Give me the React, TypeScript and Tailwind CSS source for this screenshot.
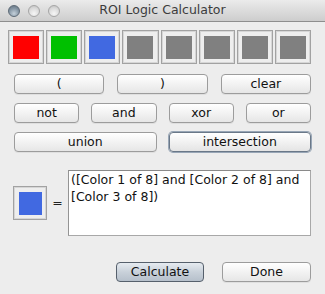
const SWATCHES = ['#ff0000', '#00c000', '#4169e1', '#808080', '#808080', '#808080', '#808080', '#808080'];

function AquaButton({ label, variant = 'normal' }: { label: string; variant?: 'normal' | 'focus' | 'default' }) {
  const base =
    'flex-1 h-[20px] rounded-[4px] flex items-center justify-center text-[12.5px] leading-none text-[#111]';
  const look =
    variant === 'default'
      ? 'border border-[#56606c] bg-gradient-to-b from-[#e6ebf0] via-[#c9d1da] to-[#b6c0cb]'
      : variant === 'focus'
        ? 'border border-[#6a7888] bg-gradient-to-b from-[#ffffff] to-[#e4e4e4] shadow-[0_0_0_1px_#98a6b6]'
        : 'border border-[#9c9c9c] bg-gradient-to-b from-[#ffffff] to-[#e6e6e6] shadow-[0_1px_0_rgba(0,0,0,0.06)]';
  return <div className={`${base} ${look}`}>{label}</div>;
}

function Light({ dark }: { dark?: boolean }) {
  return (
    <div
      className={
        dark
          ? 'w-[12px] h-[12px] rounded-full border border-[#5d6a76] bg-[radial-gradient(circle_at_50%_75%,#c4d0da_0%,#8797a5_55%,#5f6f7d_100%)]'
          : 'w-[12px] h-[12px] rounded-full border border-[#a6a6a6] bg-[radial-gradient(circle_at_50%_75%,#f6f6f6_0%,#dcdcdc_55%,#bdbdbd_100%)]'
      }
    />
  );
}

export default function App() {
  return (
    <div className="w-[325px] h-[294px] bg-[#ededed] overflow-hidden flex flex-col font-['DejaVu_Sans',sans-serif]">
      {/* Title bar */}
      <div className="relative h-[22px] shrink-0 bg-gradient-to-b from-[#ebebeb] to-[#cdcdcd] border-b border-[#8e8e8e] flex items-center">
        <div className="flex items-center gap-[8px] pl-[8px]">
          <Light dark />
          <Light />
          <Light />
        </div>
        <div className="absolute inset-0 flex items-center justify-center text-[12.5px] text-[#3c3c3c]">
          ROI Logic Calculator
        </div>
      </div>

      {/* Colour swatches */}
      <div className="flex gap-[2px] ml-[8px] mr-[14px] mt-[8px]">
        {SWATCHES.map((c, i) => (
          <div
            key={i}
            className="flex-1 h-[34px] border border-[#a2a2a2] shadow-[inset_0_0_0_1px_#d6d6d6] bg-[#eeeeee] flex items-center justify-center"
          >
            <div className="w-[26px] h-[23px]" style={{ background: c }} />
          </div>
        ))}
      </div>

      {/* Operator buttons */}
      <div className="flex flex-col gap-[9px] px-[14px] mt-[10px]">
        <div className="flex gap-[13px]">
          <AquaButton label="(" />
          <AquaButton label=")" />
          <AquaButton label="clear" />
        </div>
        <div className="flex gap-[12px]">
          <AquaButton label="not" />
          <AquaButton label="and" />
          <AquaButton label="xor" />
          <AquaButton label="or" />
        </div>
        <div className="flex gap-[12px]">
          <AquaButton label="union" />
          <AquaButton label="intersection" variant="focus" />
        </div>
      </div>

      {/* Result row */}
      <div className="flex items-center pl-[13px] pr-[14px] mt-[18px]">
        <div className="w-[34px] h-[34px] border border-[#a2a2a2] shadow-[inset_0_0_0_1px_#d6d6d6] bg-[#eeeeee] flex items-center justify-center">
          <div className="w-[23px] h-[23px] bg-[#4169e1]" />
        </div>
        <div className="w-[21px] text-center text-[12.5px] text-[#222]">=</div>
        <div className="flex-1 h-[66px] bg-white border border-[#a8a8a8] border-t-[#8a8a8a] border-l-[#949494] pl-[2px] text-[12.5px] leading-[17px] text-[#111]">
          ([Color 1 of 8] and [Color 2 of 8] and [Color 3 of 8])
        </div>
      </div>

      {/* Bottom buttons */}
      <div className="flex justify-end gap-[18px] pr-[14px] mt-[26px]">
        <div className="w-[88px] flex">
          <AquaButton label="Calculate" variant="default" />
        </div>
        <div className="w-[89px] flex">
          <AquaButton label="Done" />
        </div>
      </div>
    </div>
  );
}
